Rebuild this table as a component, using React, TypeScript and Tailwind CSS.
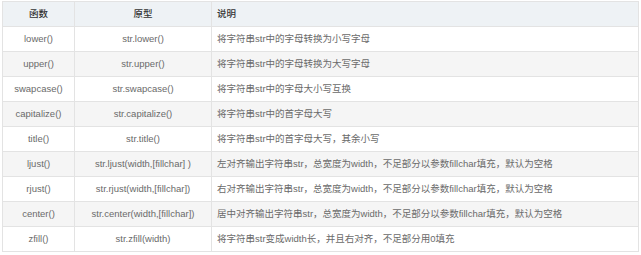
const rows = [
  { fn: 'lower()', proto: 'str.lower()', desc: '将字符串str中的字母转换为小写字母' },
  { fn: 'upper()', proto: 'str.upper()', desc: '将字符串str中的字母转换为大写字母' },
  { fn: 'swapcase()', proto: 'str.swapcase()', desc: '将字符串str中的字母大小写互换' },
  { fn: 'capitalize()', proto: 'str.capitalize()', desc: '将字符串str中的首字母大写' },
  { fn: 'title()', proto: 'str.title()', desc: '将字符串str中的首字母大写，其余小写' },
  { fn: 'ljust()', proto: 'str.ljust(width,[fillchar] )', desc: '左对齐输出字符串str，总宽度为width，不足部分以参数fillchar填充，默认为空格' },
  { fn: 'rjust()', proto: 'str.rjust(width,[fillchar])', desc: '右对齐输出字符串str，总宽度为width，不足部分以参数fillchar填充，默认为空格' },
  { fn: 'center()', proto: 'str.center(width,[fillchar])', desc: '居中对齐输出字符串str，总宽度为width，不足部分以参数fillchar填充，默认为空格' },
  { fn: 'zfill()', proto: 'str.zfill(width)', desc: '将字符串str变成width长，并且右对齐，不足部分用0填充' },
];

export default function App() {
  return (
    <div className="w-[641px] h-[255px] bg-white pt-px pl-[2px] font-['Liberation_Sans','Noto_Sans_CJK_SC',sans-serif] text-[9.5px] text-[#6a6a6a]">
      <table className="w-[637px] border-collapse table-fixed">
        <colgroup>
          <col className="w-[72px]" />
          <col className="w-[137px]" />
          <col />
        </colgroup>
        <thead>
          <tr className="h-[25px] bg-[#eef2f5] text-[#333]">
            <th className="border border-[#e3e3e3] text-center font-medium">函数</th>
            <th className="border border-[#e3e3e3] text-center font-medium">原型</th>
            <th className="border border-[#e3e3e3] text-left pl-[5px] font-medium">说明</th>
          </tr>
        </thead>
        <tbody>
          {rows.map((r, i) => (
            <tr key={r.fn} className={`h-[25px] ${i % 2 === 1 ? 'bg-[#f5f5f5]' : 'bg-white'}`}>
              <td className="border border-[#e3e3e3] text-center">{r.fn}</td>
              <td className="border border-[#e3e3e3] text-center">{r.proto}</td>
              <td className="border border-[#e3e3e3] pl-[5px] whitespace-nowrap">{r.desc}</td>
            </tr>
          ))}
        </tbody>
      </table>
    </div>
  );
}
